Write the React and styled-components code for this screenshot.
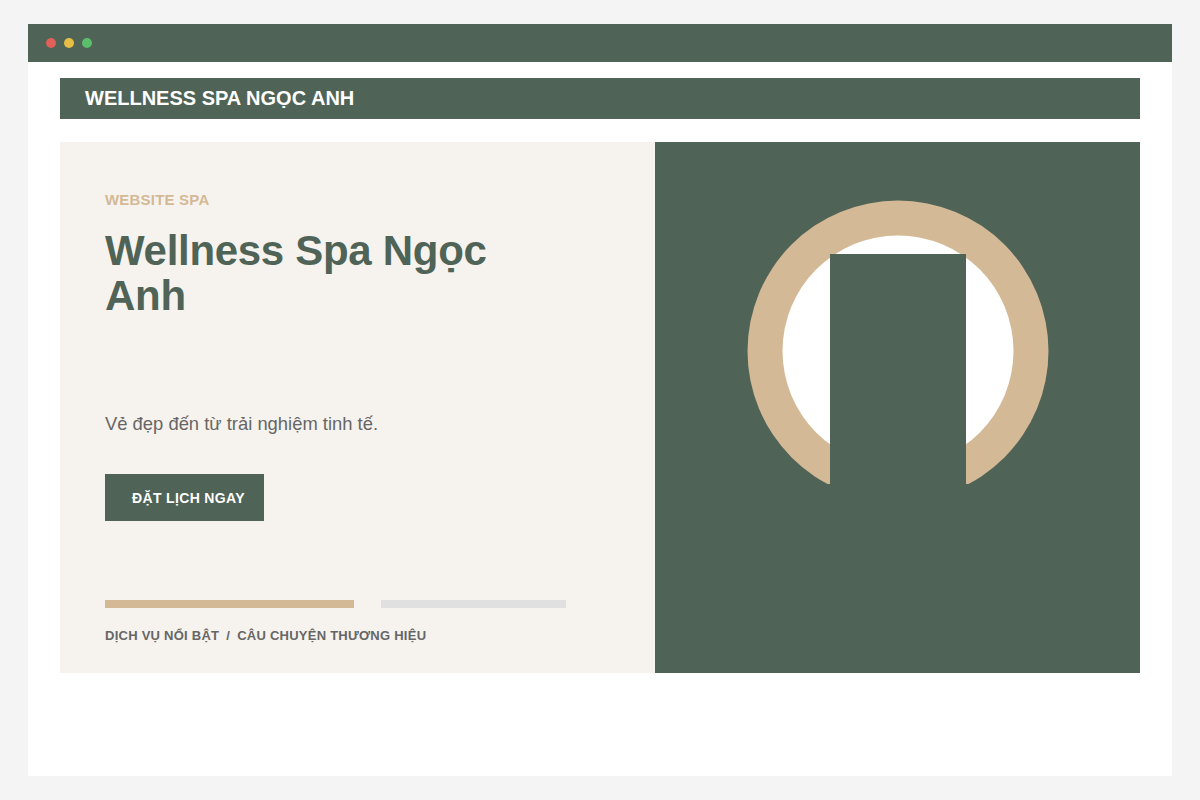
import styled, { createGlobalStyle } from "styled-components";

const green = "#506357";
const tan = "#d4b996";
const cream = "#f6f3ee";
const textGray = "#666666";

const GlobalStyle = createGlobalStyle`
  html, body {
    margin: 0;
    padding: 0;
    background: #f4f4f4;
    font-family: "Liberation Sans", Arial, sans-serif;
  }
  * {
    box-sizing: border-box;
  }
`;

export default function App() {
  return (
    <>
      <GlobalStyle />
      <Page>
        <Window>
          <TitleBar>
            <Dot color="#e0605a" />
            <Dot color="#e7be45" />
            <Dot color="#5bbe6a" />
          </TitleBar>
          <Content>
            <SiteHeader>WELLNESS SPA NGỌC ANH</SiteHeader>
            <Hero>
              <HeroText>
                <Eyebrow>WEBSITE SPA</Eyebrow>
                <Title>Wellness Spa Ngọc Anh</Title>
                <Subtitle>Vẻ đẹp đến từ trải nghiệm tinh tế.</Subtitle>
                <BookButton>ĐẶT LỊCH NGAY</BookButton>
                <Progress>
                  <Bar width={249} color={tan} />
                  <Bar width={185} color="#e0e0e0" />
                </Progress>
                <Links>
                  DỊCH VỤ NỔI BẬT<Sep>/</Sep>CÂU CHUYỆN THƯƠNG HIỆU
                </Links>
              </HeroText>
              <HeroArt>
                <svg width="302" height="284" viewBox="0 0 302 284">
                  <circle cx="151" cy="151" r="150.5" fill={tan} />
                  <circle cx="151" cy="151" r="115.5" fill="#ffffff" />
                  <rect x="83" y="54" width="136" height="230" fill={green} />
                </svg>
              </HeroArt>
            </Hero>
          </Content>
        </Window>
      </Page>
    </>
  );
}

const Page = styled.div`
  padding: 24px 28px;
  min-height: 800px;
`;

const Window = styled.div`
  background: #ffffff;
  height: 752px;
  display: flex;
  flex-direction: column;
`;

const TitleBar = styled.div`
  height: 38px;
  background: ${green};
  display: flex;
  align-items: center;
  gap: 8px;
  padding-left: 18px;
`;

const Dot = styled.span`
  width: 10px;
  height: 10px;
  border-radius: 50%;
  background: ${({ color }) => color};
`;

const Content = styled.div`
  padding: 16px 32px;
`;

const SiteHeader = styled.header`
  height: 41px;
  background: ${green};
  color: #ffffff;
  display: flex;
  align-items: center;
  padding: 0 25px;
  font-size: 20px;
  font-weight: 700;
`;

const Hero = styled.section`
  margin-top: 23px;
  display: grid;
  grid-template-columns: 595px 1fr;
  height: 531px;
`;

const HeroText = styled.div`
  background: ${cream};
  padding: 49px 45px 0;
  display: flex;
  flex-direction: column;
  align-items: flex-start;
`;

const Eyebrow = styled.div`
  font-size: 15px;
  line-height: 18px;
  font-weight: 700;
  letter-spacing: 0.2px;
  color: ${tan};
`;

const Title = styled.h1`
  margin: 19px 0 0;
  max-width: 420px;
  font-size: 42px;
  line-height: 45px;
  font-weight: 700;
  letter-spacing: -0.3px;
  color: ${green};
`;

const Subtitle = styled.p`
  margin: 92px 0 0;
  font-size: 18.4px;
  line-height: 27px;
  color: ${textGray};
`;

const BookButton = styled.button`
  margin-top: 37px;
  height: 47px;
  padding: 0 19px 0 27px;
  border: none;
  background: ${green};
  color: #ffffff;
  font-family: inherit;
  font-size: 14px;
  font-weight: 700;
  letter-spacing: 0.35px;
  cursor: pointer;
`;

const Progress = styled.div`
  margin-top: 79px;
  display: flex;
  gap: 27px;
`;

const Bar = styled.div`
  width: ${({ width }) => width}px;
  height: 8px;
  background: ${({ color }) => color};
`;

const Links = styled.div`
  margin-top: 20px;
  font-size: 13px;
  line-height: 16px;
  font-weight: 700;
  letter-spacing: 0.25px;
  color: ${textGray};
`;

const Sep = styled.span`
  margin: 0 7px;
`;

const HeroArt = styled.div`
  background: ${green};
  display: flex;
  justify-content: center;
  align-items: flex-start;
  padding-top: 58px;
`;
